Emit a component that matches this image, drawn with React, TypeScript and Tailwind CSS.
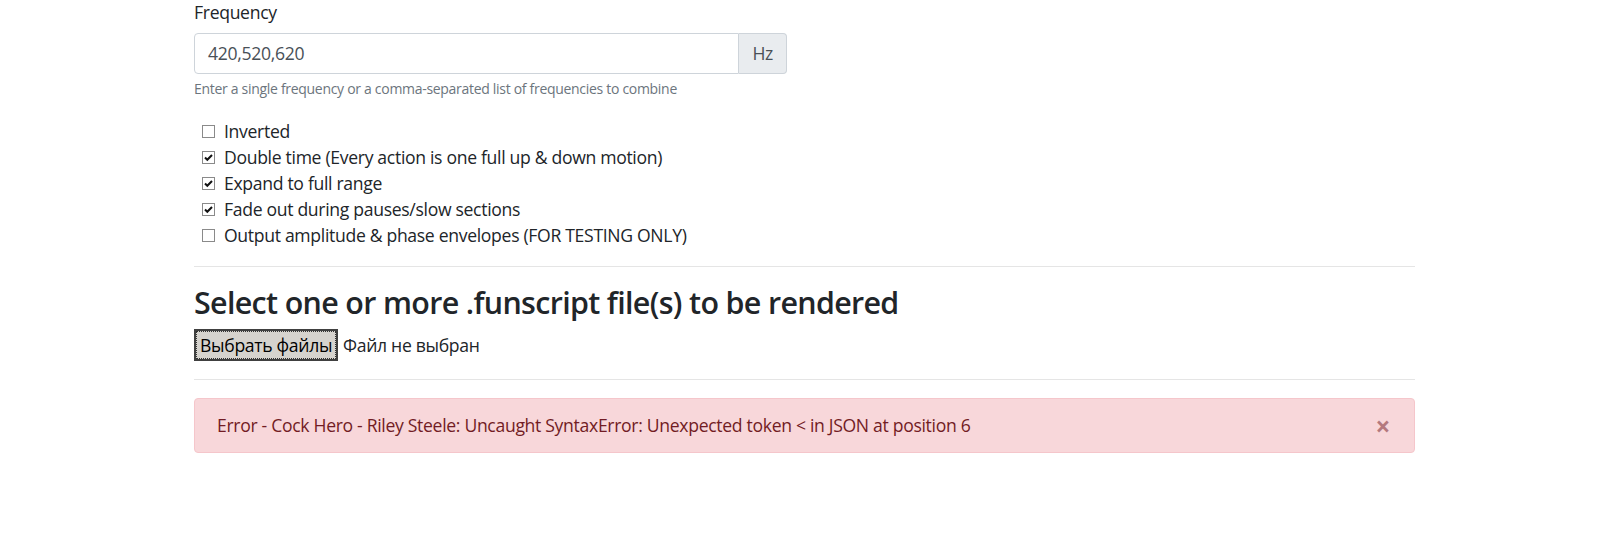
import { useState } from "react";

const options = [
  { label: "Inverted", checked: false },
  { label: "Double time (Every action is one full up & down motion)", checked: true },
  { label: "Expand to full range", checked: true },
  { label: "Fade out during pauses/slow sections", checked: true },
  { label: "Output amplitude & phase envelopes (FOR TESTING ONLY)", checked: false },
];

const CheckBox = ({ checked }: { checked: boolean }) => (
  <span className="mt-[1px] flex h-[13px] w-[13px] shrink-0 items-center justify-center border border-[#8a8a8a] bg-white">
    {checked && (
      <svg viewBox="0 0 11 11" className="h-[11px] w-[11px]">
        <path d="M2 5.5 L4.3 7.8 L9 3" fill="none" stroke="#111" strokeWidth="2" />
      </svg>
    )}
  </span>
);

const App = () => {
  const [showError, setShowError] = useState(true);

  return (
    <div className="min-h-[549px] bg-white font-['Open_Sans',sans-serif] text-[17.6px] tracking-[-0.32px] text-[#212529]">
      <div className="ml-[194px] w-[1221px]">
        {/* Frequency */}
        <div>
          <label className="mb-[9px] block leading-[24px]">Frequency</label>
          <div className="flex w-[593px]">
            <div className="flex h-[41px] flex-1 items-center rounded-l-[4px] border border-[#ced4da] px-[13px] text-[#495057]">
              420,520,620
            </div>
            <div className="flex h-[41px] items-center rounded-r-[4px] border border-l-0 border-[#ced4da] bg-[#e9ecef] px-[13px] text-[#495057]">
              Hz
            </div>
          </div>
          <p className="mt-[4px] text-[14px] leading-[21px] tracking-[-0.3px] text-[#6c757d]">
            Enter a single frequency or a comma-separated list of frequencies to combine
          </p>
        </div>

        {/* Options */}
        <div className="mt-[19px] pl-[8px]">
          {options.map((o) => (
            <div key={o.label} className="flex h-[26px] items-center gap-[9px]">
              <CheckBox checked={o.checked} />
              <span>{o.label}</span>
            </div>
          ))}
        </div>

        <hr className="mt-[18px] border-[#e5e5e5]" />

        {/* File select */}
        <h2 className="mt-[17px] text-[30.4px] font-semibold leading-[37px] tracking-[-0.65px]">
          Select one or more .funscript file(s) to be rendered
        </h2>
        <div className="mt-[8px] flex items-center gap-[5px]">
          <button className="h-[32px] border-2 border-[#404040] bg-[#d6d3ce] p-[1px] text-black">
            <span className="flex h-full items-center px-[3px] outline-1 outline-dotted outline-[#333]">
              Выбрать файлы
            </span>
          </button>
          <span>Файл не выбран</span>
        </div>

        <hr className="mt-[18px] border-[#e5e5e5]" />

        {/* Error */}
        {showError && (
          <div className="mt-[18px] flex h-[55px] items-center justify-between rounded-[4px] border border-[#f5c6cb] bg-[#f8d7da] pl-[22px] pr-[24px] text-[#721c24]">
            <span>
              Error - Cock Hero - Riley Steele: Uncaught SyntaxError: Unexpected token &lt; in JSON at position 6
            </span>
            <button
              onClick={() => setShowError(false)}
              className="text-[26px] font-bold leading-none text-[#721c24] opacity-50"
            >
              ×
            </button>
          </div>
        )}
      </div>
    </div>
  );
};

export default App;
